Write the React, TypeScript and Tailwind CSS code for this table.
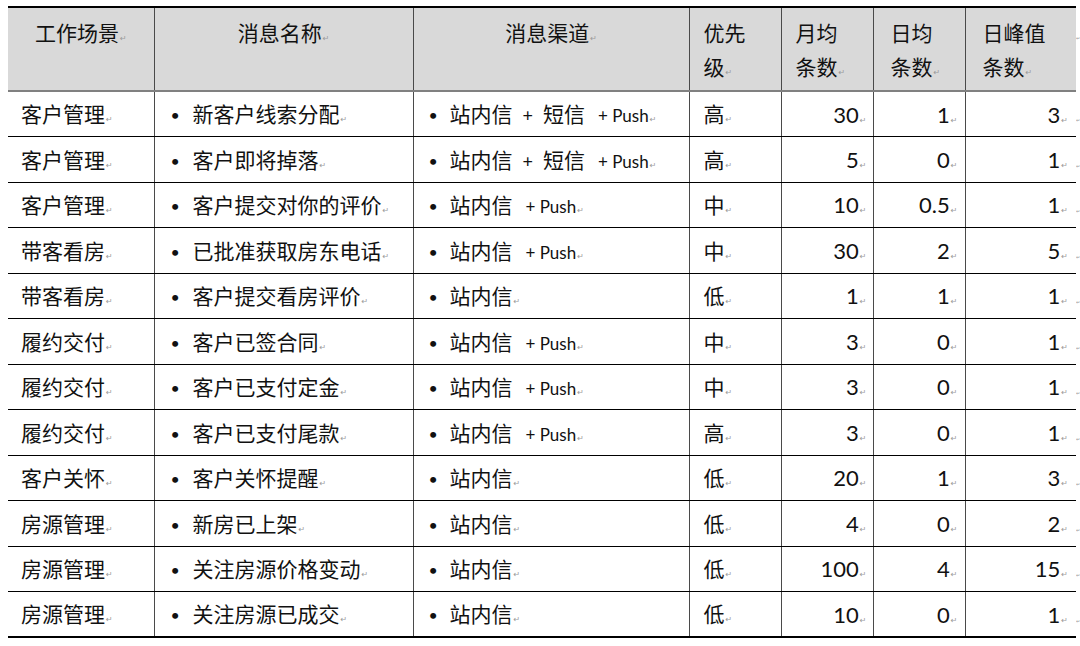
const rows: [string, string, 'full' | 'push' | 'in', string, string, string, string][] = [
  ['客户管理', '新客户线索分配', 'full', '高', '30', '1', '3'],
  ['客户管理', '客户即将掉落', 'full', '高', '5', '0', '1'],
  ['客户管理', '客户提交对你的评价', 'push', '中', '10', '0.5', '1'],
  ['带客看房', '已批准获取房东电话', 'push', '中', '30', '2', '5'],
  ['带客看房', '客户提交看房评价', 'in', '低', '1', '1', '1'],
  ['履约交付', '客户已签合同', 'push', '中', '3', '0', '1'],
  ['履约交付', '客户已支付定金', 'push', '中', '3', '0', '1'],
  ['履约交付', '客户已支付尾款', 'push', '高', '3', '0', '1'],
  ['客户关怀', '客户关怀提醒', 'in', '低', '20', '1', '3'],
  ['房源管理', '新房已上架', 'in', '低', '4', '0', '2'],
  ['房源管理', '关注房源价格变动', 'in', '低', '100', '4', '15'],
  ['房源管理', '关注房源已成交', 'in', '低', '10', '0', '1'],
];

function Mark() {
  return <span className="ml-[1px] font-['DejaVu_Sans'] text-[8px] text-[#9a9a9a]">↵</span>;
}

// row-end mark beside the table, kept inside the page edge
function EndMark() {
  return <span className="font-['DejaVu_Sans'] text-[5px] text-[#9a9a9a]">↵</span>;
}

function Bullet({w}: {w: string}) {
  return <span className={`inline-block ${w} text-[16px] align-[1px]`}>•</span>;
}

function Channel({kind}: {kind: 'full' | 'push' | 'in'}) {
  if (kind === 'in') return <>站内信</>;
  return (
    <>
      站内信
      {kind === 'full' && (
        <>
          <span className="mx-[10px] text-[18px]">+</span>短信
        </>
      )}
      <span className="ml-[13px] text-[17px]">+ Push</span>
    </>
  );
}

export default function App() {
  const vline = 'border-l border-l-[#4a4a4a]';
  const head = 'border-t-2 border-t-black border-b-2 border-b-[#808080] pt-[8px] font-normal';
  return (
    <div className="w-[1080px] h-[646px] overflow-hidden bg-white pt-[6px] font-['Lato','Noto_Sans_CJK_SC',sans-serif] text-[21px] text-[#111]">
      <table className="ml-[8px] border-collapse table-fixed w-[1072px]">
        <colgroup>
          <col className="w-[146px]" />
          <col className="w-[259px]" />
          <col className="w-[276px]" />
          <col className="w-[92px]" />
          <col className="w-[92px]" />
          <col className="w-[92px]" />
          <col className="w-[111px]" />
          <col className="w-[4px]" />
        </colgroup>
        <thead>
          <tr className="h-[82px] align-top leading-[34px] bg-[#d9d9d9]">
            <th className={`${head} text-center`}>
              工作场景<Mark />
            </th>
            <th className={`${vline} ${head} text-center`}>
              消息名称<Mark />
            </th>
            <th className={`${vline} ${head} text-center`}>
              消息渠道<Mark />
            </th>
            <th className={`${vline} ${head} pl-[14px] text-left`}>
              优先<br />级<Mark />
            </th>
            <th className={`${vline} ${head} pl-[14px] text-left`}>
              月均<br />条数<Mark />
            </th>
            <th className={`${vline} ${head} pl-[17px] text-left`}>
              日均<br />条数<Mark />
            </th>
            <th className={`${vline} ${head} pl-[17px] text-left`}>
              日峰值<br />条数<Mark />
            </th>
            <th className="bg-white pt-[8px] text-left font-normal overflow-hidden">
              <EndMark />
            </th>
          </tr>
        </thead>
        <tbody>
          {rows.map((r, i) => {
            const last = i === rows.length - 1;
            const hb = last ? 'border-b-2 border-b-black' : 'border-b border-b-black';
            return (
              <tr key={i} className="h-[45.5px] align-middle">
                <td className={`${hb} pl-[13px] whitespace-nowrap`}>
                  {r[0]}<Mark />
                </td>
                <td className={`${vline} ${hb} pl-[16px] whitespace-nowrap`}>
                  <Bullet w="w-[22px]" />
                  {r[1]}<Mark />
                </td>
                <td className={`${vline} ${hb} pl-[15px] whitespace-nowrap`}>
                  <Bullet w="w-[21px]" />
                  <Channel kind={r[2]} />
                  <Mark />
                </td>
                <td className={`${vline} ${hb} pl-[14px]`}>
                  {r[3]}<Mark />
                </td>
                <td className={`${vline} ${hb} pr-[6px] text-right text-[22px]`}>
                  {r[4]}<Mark />
                </td>
                <td className={`${vline} ${hb} pr-[7px] text-right text-[22px]`}>
                  {r[5]}<Mark />
                </td>
                <td className={`${vline} ${hb} pr-[8px] text-right text-[22px]`}>
                  {r[6]}<Mark />
                </td>
                <td className="overflow-hidden whitespace-nowrap">
                  <EndMark />
                </td>
              </tr>
            );
          })}
        </tbody>
      </table>
    </div>
  );
}
